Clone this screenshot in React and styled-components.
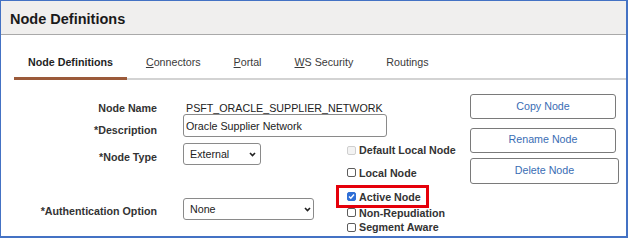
import React from 'react';
import styled, { createGlobalStyle } from 'styled-components';

const GlobalStyle = createGlobalStyle`
  html, body {
    margin: 0;
    padding: 0;
    background: #fff;
  }
  body {
    font-family: "Liberation Sans", Arial, sans-serif;
  }
  * {
    box-sizing: border-box;
  }
`;

const Frame = styled.div`
  width: 628px;
  height: 238px;
  border: solid #4472c4;
  border-width: 1px 2px 2px 1px;
  overflow: hidden;
  background: #fff;
`;

const Header = styled.div`
  height: 34px;
  background: #f0efee;
  border-bottom: 1px solid #a9a9a9;
  padding: 2px 0 0 9px;
  display: flex;
  align-items: center;
`;

const Title = styled.h1`
  margin: 0;
  font-size: 14.5px;
  font-weight: bold;
  color: #1a1a1a;
`;

const TabBar = styled.div`
  display: flex;
  align-items: flex-end;
  gap: 5px;
  margin-left: 13px;
  padding-top: 21px;
  border-bottom: 2px solid #d3d3d3;
`;

const Tab = styled.div`
  padding: 0 14px 8px;
  margin-bottom: -2px;
  line-height: 13px;
  font-size: 10.7px;
  font-weight: ${p => (p.$active ? 'bold' : 'normal')};
  color: ${p => (p.$active ? '#1f1f1f' : '#3a3a3a')};
  border-bottom: 3px solid ${p => (p.$active ? '#9b5a3a' : 'transparent')};
  white-space: nowrap;
`;

const Main = styled.div`
  display: flex;
`;

const FormArea = styled.div`
  width: 469px;
  padding-top: 23px;
`;

const FieldRow = styled.div`
  display: grid;
  grid-template-columns: 156px 1fr;
  column-gap: 26px;
  align-items: start;
  margin-top: ${p => p.$mt || 0}px;
  line-height: ${p => p.$lh || 13}px;
`;

const Label = styled.div`
  text-align: right;
  font-size: 10.7px;
  font-weight: bold;
  color: #333;
  padding-top: ${p => p.$pt || 0}px;
  white-space: nowrap;
`;

const ValueText = styled.div`
  padding-left: 3px;
  font-size: 10.7px;
  color: #222;
  white-space: nowrap;
`;

const TextInput = styled.input`
  width: 204px;
  height: 23px;
  padding: 0 2px;
  border: 1px solid #8a8a8a;
  border-radius: 3px;
  font-family: inherit;
  font-size: 10.7px;
  color: #222;
  outline: none;
`;

const SelectWrap = styled.div`
  position: relative;
  width: ${p => p.$w}px;
  height: 22px;
  svg {
    position: absolute;
    right: ${p => p.$arrow || 5}px;
    top: 9px;
    pointer-events: none;
  }
`;

const Select = styled.select`
  appearance: none;
  width: 100%;
  height: 100%;
  padding: 0 0 1px 6px;
  border: 1px solid #8a8a8a;
  border-radius: 3px;
  background: #fff;
  font-family: inherit;
  font-size: 10.7px;
  color: #222;
  outline: none;
`;

const Lower = styled.div`
  display: flex;
  margin-top: 6px;
`;

const LeftFields = styled.div`
  width: 346px;
`;

const CheckList = styled.div`
  display: flex;
  flex-direction: column;
  padding-top: 0.5px;
`;

const CheckItem = styled.label`
  position: relative;
  display: flex;
  align-items: center;
  gap: 3px;
  height: 13px;
  margin-top: ${p => p.$mt || 0}px;
  font-size: 10.7px;
  font-weight: bold;
  color: #333;
  white-space: nowrap;
`;

const Box = styled.span`
  width: 9px;
  height: 9px;
  flex: none;
  display: flex;
  align-items: center;
  justify-content: center;
  border: 1px solid ${p => (p.$disabled ? '#cfcfcf' : p.$checked ? '#2f6fd6' : '#5c5c5c')};
  border-radius: 2px;
  background: ${p => (p.$disabled ? '#f3f3f3' : p.$checked ? '#2f6fd6' : '#fff')};
`;

const Highlight = styled.span`
  position: absolute;
  left: -11px;
  top: -5px;
  width: 93px;
  height: 23px;
  border: 3px solid #e5000a;
  pointer-events: none;
`;

const ButtonColumn = styled.div`
  display: flex;
  flex-direction: column;
  padding-top: 14px;
`;

const Button = styled.button`
  width: ${p => p.$w || 146}px;
  height: ${p => p.$h || 25}px;
  margin-top: ${p => p.$mt || 0}px;
  padding: 0 0 2px;
  border: 1px solid #7a7a7a;
  border-radius: 3px;
  background: #fff;
  font-family: inherit;
  font-size: 10.7px;
  color: #3a6db4;
`;

const Chevron = () => (
  <svg width="7" height="5" viewBox="0 0 7 5">
    <path d="M1 1 L3.5 3.6 L6 1" fill="none" stroke="#222" strokeWidth="1.6" />
  </svg>
);

const Check = ({ checked, disabled }) => (
  <Box $checked={checked} $disabled={disabled}>
    {checked && (
      <svg width="7" height="7" viewBox="0 0 7 7">
        <path d="M1 3.6 L2.8 5.3 L6 1.5" fill="none" stroke="#fff" strokeWidth="1.4" />
      </svg>
    )}
  </Box>
);

const tabs = [
  { key: 'nd', label: 'Node Definitions', active: true },
  { key: 'c', u: 'C', label: 'onnectors' },
  { key: 'p', u: 'P', label: 'ortal' },
  { key: 'w', u: 'W', label: 'S Security' },
  { key: 'r', label: 'Routings' },
];

const checks = [
  { label: 'Default Local Node', disabled: true, mt: 0 },
  { label: 'Local Node', mt: 9.5 },
  { label: 'Active Node', checked: true, highlight: true, mt: 11 },
  { label: 'Non-Repudiation', mt: 3 },
  { label: 'Segment Aware', mt: 1.5 },
];

export default function App() {
  return (
    <>
      <GlobalStyle />
      <Frame>
        <Header>
          <Title>Node Definitions</Title>
        </Header>
        <TabBar>
          {tabs.map(t => (
            <Tab key={t.key} $active={t.active}>
              {t.u && <u>{t.u}</u>}
              {t.label}
            </Tab>
          ))}
        </TabBar>
        <Main>
          <FormArea>
            <FieldRow $lh={11}>
              <Label>Node Name</Label>
              <ValueText>PSFT_ORACLE_SUPPLIER_NETWORK</ValueText>
            </FieldRow>
            <FieldRow>
              <Label $pt={10}>*Description</Label>
              <TextInput defaultValue="Oracle Supplier Network" />
            </FieldRow>
            <Lower>
              <LeftFields>
                <FieldRow>
                  <Label $pt={8}>*Node Type</Label>
                  <SelectWrap $w={78} $arrow={5}>
                    <Select defaultValue="External">
                      <option>External</option>
                      <option>Internal</option>
                    </Select>
                    <Chevron />
                  </SelectWrap>
                </FieldRow>
                <FieldRow $mt={33}>
                  <Label $pt={7}>*Authentication Option</Label>
                  <SelectWrap $w={131} $arrow={3}>
                    <Select defaultValue="None">
                      <option>None</option>
                      <option>Password</option>
                      <option>Certificate</option>
                    </Select>
                    <Chevron />
                  </SelectWrap>
                </FieldRow>
              </LeftFields>
              <CheckList>
                {checks.map(c => (
                  <CheckItem key={c.label} $mt={c.mt}>
                    <Check checked={c.checked} disabled={c.disabled} />
                    {c.label}
                    {c.highlight && <Highlight />}
                  </CheckItem>
                ))}
              </CheckList>
            </Lower>
          </FormArea>
          <ButtonColumn>
            <Button>Copy Node</Button>
            <Button $mt={8.5}>Rename Node</Button>
            <Button $mt={5.5} $w={149} $h={26}>Delete Node</Button>
          </ButtonColumn>
        </Main>
      </Frame>
    </>
  );
}
